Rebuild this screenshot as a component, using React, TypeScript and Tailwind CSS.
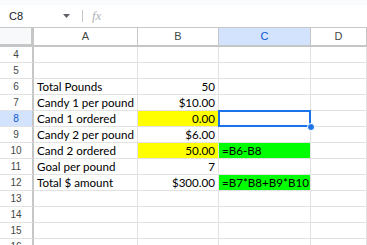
import React from "react";

type Cell = {
  text?: string;
  align?: "left" | "right";
  bg?: string;
};

const rows: { n: number; a?: string; b?: Cell; c?: Cell }[] = [
  { n: 4 },
  { n: 5 },
  { n: 6, a: "Total Pounds", b: { text: "50", align: "right" } },
  { n: 7, a: "Candy 1 per pound", b: { text: "$10.00", align: "right" } },
  { n: 8, a: "Cand 1 ordered", b: { text: "0.00", align: "right", bg: "bg-[#ffff00]" } },
  { n: 9, a: "Candy 2 per pound", b: { text: "$6.00", align: "right" } },
  {
    n: 10,
    a: "Cand 2 ordered",
    b: { text: "50.00", align: "right", bg: "bg-[#ffff00]" },
    c: { text: "=B6-B8", bg: "bg-[#00ff00]" },
  },
  { n: 11, a: "Goal per pound", b: { text: "7", align: "right" } },
  {
    n: 12,
    a: "Total $ amount",
    b: { text: "$300.00", align: "right" },
    c: { text: "=B7*B8+B9*B10", bg: "bg-[#00ff00]" },
  },
  { n: 13 },
  { n: 14 },
  { n: 15 },
  { n: 16 },
];

const cellFont = { fontFamily: "Lato, 'Liberation Sans', sans-serif" };

function DataCell({ cell, selected }: { cell?: Cell; selected?: boolean }) {
  return (
    <div
      className={`relative h-[16px] border-r border-b border-[#e2e2e2] px-[3px] text-[11.6px] leading-[15px] text-black whitespace-nowrap ${
        cell?.bg ?? "bg-white"
      } ${cell?.align === "right" ? "text-right" : "text-left"}`}
      style={cellFont}
    >
      {cell?.text}
      {selected && (
        <>
          <div className="absolute -left-px -top-px right-[-1px] bottom-[-1px] border-2 border-[#1a73e8] pointer-events-none" />
          <div className="absolute right-[-5px] bottom-[-5px] w-[8px] h-[8px] rounded-full bg-[#1a73e8] border border-white z-10" />
        </>
      )}
    </div>
  );
}

export default function App() {
  return (
    <div
      className="w-[367px] h-[245px] overflow-hidden bg-white"
      style={{ fontFamily: "'Liberation Sans', Arial, sans-serif" }}
    >
      <div className="h-[5px] bg-[#f9fbfd]" />
      <div className="h-[23px] flex items-center border-b border-[#c7c7c7] text-[11px] text-[#202124]">
        <div className="w-[60px] pl-[9px]">C8</div>
        <div className="w-[12px] flex justify-center">
          <svg width="7" height="4" viewBox="0 0 7 4">
            <path d="M0 0h7L3.5 4z" fill="#5f6368" />
          </svg>
        </div>
        <div className="ml-[10px] w-px h-[12px] bg-[#c4c7c5]" />
        <div
          className="ml-[9px] text-[13px] italic text-[#b0b4b8]"
          style={{ fontFamily: "'Liberation Serif', serif" }}
        >
          fx
        </div>
      </div>
      <div className="grid grid-cols-[34px_104px_81px_92px_1fr]">
        <div className="h-[19px] bg-[#f8f9fa] border-r-[3px] border-b-[3px] border-[#c4c7c5]" />
        {["A", "B", "C", "D"].map((l) => (
          <div
            key={l}
            className={`h-[19px] flex items-center justify-center border-r border-b-2 border-[#c4c7c5] text-[11px] ${
              l === "C" ? "bg-[#d3e3fd] text-[#0b57d0]" : "bg-white text-[#444746]"
            }`}
          >
            {l}
          </div>
        ))}
        {rows.map((r) => (
          <React.Fragment key={r.n}>
            <div
              className={`h-[16px] flex items-center justify-center border-r-2 border-b border-r-[#c4c7c5] border-b-[#e2e2e2] text-[10px] ${
                r.n === 8 ? "bg-[#d3e3fd] text-[#0b57d0]" : "bg-white text-[#444746]"
              }`}
            >
              {r.n}
            </div>
            <DataCell cell={r.a ? { text: r.a } : undefined} />
            <DataCell cell={r.b} />
            <DataCell cell={r.c} selected={r.n === 8} />
            <DataCell />
          </React.Fragment>
        ))}
      </div>
    </div>
  );
}
